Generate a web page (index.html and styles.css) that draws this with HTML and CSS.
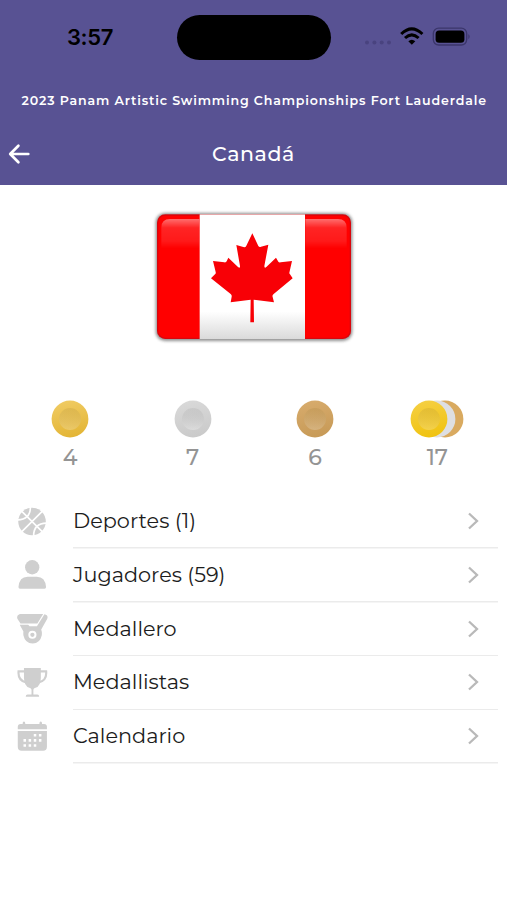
FILE: index.html
```html
<!DOCTYPE html>
<html lang="es">
<head>
<meta charset="utf-8">
<title>Canadá</title>
<link rel="stylesheet" href="styles.css">
</head>
<body>
<header class="header">
  <div class="status">
    <span class="clock">3:57</span>
    <span class="island"></span>
    <svg class="indicators" width="110" height="24" viewBox="0 0 110 24">
      <g fill="#49437f"><circle cx="6" cy="17.500" r="2"/><circle cx="13.400" cy="17.500" r="2"/><circle cx="20.700" cy="17.500" r="2"/><circle cx="28" cy="17.500" r="2"/></g>
      <g fill="none" stroke="#000" stroke-width="3"><path d="M40.200 9Q50.800-1.200 61.400 9"/><path d="M44 13Q50.800 6.600 57.600 13"/></g>
      <path d="M47.300 16.200Q50.800 13.200 54.300 16.200L50.800 19.800Z"/>
      <rect x="72.300" y="3.200" width="33.400" height="16.800" rx="5.400" fill="none" stroke="#3b366b" stroke-width="1.300"/>
      <rect x="74.600" y="5.500" width="28.800" height="12.200" rx="3.500"/>
      <path d="M107.400 9q2.400 2.600 0 5.200z" fill="#3b366b"/>
    </svg>
  </div>
  <div class="event"><span>2023 Panam Artistic Swimming Championships Fort Lauderdale</span></div>
  <nav class="nav">
    <svg class="back" width="22" height="22" viewBox="0 0 22 22"><path d="M20.300 11H2.500M10.400 2.800L2.200 11l8.200 8.200" fill="none" stroke="#fff" stroke-width="2.700" stroke-linecap="round" stroke-linejoin="round"/></svg>
    <h1>Canadá</h1>
  </nav>
</header>
<main>
  <svg class="flag" width="220" height="150" viewBox="0 0 660 450">
    <defs>
      <linearGradient id="white" x2="0" y2="1"><stop offset=".78" stop-color="#fff"/><stop offset="1" stop-color="#dadada"/></linearGradient>
      <linearGradient id="shine" x2="0" y2="1"><stop offset="0" stop-color="#fff" stop-opacity=".43"/><stop offset=".3" stop-color="#fff" stop-opacity=".14"/><stop offset=".75" stop-color="#fff" stop-opacity=".1"/><stop offset="1" stop-color="#fff" stop-opacity="0"/></linearGradient>
      <clipPath id="edge"><rect x="36" y="43" width="582" height="374" rx="25"/></clipPath>
      <filter id="soft"><feGaussianBlur stdDeviation="5"/></filter>
    </defs>
    <rect x="32" y="39" width="590" height="384" rx="28" fill="#666" opacity=".72" filter="url(#soft)"/>
    <g clip-path="url(#edge)">
      <path fill="#f00" d="M36 43h582v374H36z"/>
      <rect x="36" y="43" width="582" height="374" rx="25" fill="none" stroke="#a01020" stroke-opacity=".4" stroke-width="8"/>
      <path fill="url(#white)" d="M164 43h316v374H164z"/>
    </g>
    <path fill="url(#shine)" d="M49 145V83q0-26 26-26h88v88zM481 57h98q26 0 26 26v62H481z"/>
    <path fill="#f80006" d="M322 100l18 38q3 4 8 2l22-6-12 64q0 8 6 3l29-28 7 12q2 3 7 2l34-4-8 35q0 3 2 5l8 12-57 47q-5 4-3 9l4 16-61-8 1 68h-11l1-68-60 8 3-17q1-5-3-8l-59-47 12-12q3-3 2-7l-8-33 34 4q5 1 7-3l5-11 29 28q7 5 6-3l-11-63 21 6q6 2 9-4z"/>
  </svg>
  <svg class="defs" width="0" height="0">
    <defs>
      <linearGradient id="gold" x1=".3" x2=".55" y2="1"><stop stop-color="#f0cb63"/><stop offset="1" stop-color="#e3b535"/></linearGradient>
      <linearGradient id="silver" x1=".3" x2=".55" y2="1"><stop stop-color="#d9d9d9"/><stop offset="1" stop-color="#cacaca"/></linearGradient>
      <linearGradient id="bronze" x1=".3" x2=".55" y2="1"><stop stop-color="#d7ab6c"/><stop offset="1" stop-color="#c79a57"/></linearGradient>
      <linearGradient id="bright" x1=".3" x2=".55" y2="1"><stop stop-color="#f5cf43"/><stop offset="1" stop-color="#f0c310"/></linearGradient>
      <linearGradient id="dish" x2="0" y2="1"><stop stop-color="#8a6a20" stop-opacity=".15"/><stop offset="1" stop-color="#fff" stop-opacity=".22"/></linearGradient>
      <linearGradient id="dishgray" x2="0" y2="1"><stop stop-color="#777" stop-opacity=".13"/><stop offset="1" stop-color="#fff" stop-opacity=".3"/></linearGradient>
    </defs>
  </svg>
  <section class="medals">
    <div class="medal"><svg width="38" height="38"><circle cx="19" cy="19" r="18.400" fill="url(#gold)"/><circle cx="19" cy="19" r="11" fill="url(#dish)"/></svg><span>4</span></div>
    <div class="medal"><svg width="38" height="38"><circle cx="19" cy="19" r="18.400" fill="url(#silver)"/><circle cx="19" cy="19" r="11" fill="url(#dishgray)"/></svg><span>7</span></div>
    <div class="medal"><svg width="38" height="38"><circle cx="19" cy="19" r="18.400" fill="url(#bronze)"/><circle cx="19" cy="19" r="11" fill="url(#dish)"/></svg><span>6</span></div>
    <div class="medal"><svg width="54" height="38"><circle cx="35" cy="19" r="18.400" fill="#d9aa60"/><circle cx="27" cy="19" r="18.400" fill="#dedfe2"/><circle cx="19" cy="19" r="18.400" fill="url(#bright)"/><circle cx="19" cy="19" r="11" fill="url(#dish)"/></svg><span>17</span></div>
  </section>
  <ul class="menu">
    <li>
      <svg class="icon" viewBox="0 0 32 32"><circle cx="15.500" cy="16" r="14.200" fill="#cfcfcf"/><path d="M5 5.500L26 26.500M26 5.500L5 26.500M13.800 1Q14 14 .5 14.300M17.200 31Q17 18 30.500 17.700" fill="none" stroke="#fff" stroke-width="1.700"/></svg>
      <span class="label">Deportes (1)</span><svg class="chevron" viewBox="0 0 12 18"><path d="M2 1.500L10 9 2 16.500"/></svg>
    </li>
    <li>
      <svg class="icon" viewBox="0 0 32 32"><g fill="#cfcfcf"><circle cx="15.700" cy="8.500" r="7.400"/><path d="M1.500 29Q2.300 18.200 11 18.200h9.400Q29.200 18.200 30 29q0 1.600-1.600 1.600H3.100q-1.600 0-1.600-1.600z"/></g></svg>
      <span class="label">Jugadores (59)</span><svg class="chevron" viewBox="0 0 12 18"><path d="M2 1.500L10 9 2 16.500"/></svg>
    </li>
    <li>
      <svg class="icon" viewBox="0 0 32 32"><path fill="#cfcfcf" d="M3 1h24l-6 9.800H3.600L.4 6Q-.8 2 3 1zM28.300 1.200q4.500 1 2.800 5L25 17q1 3 .6 6-1.800 8.500-9.500 8.500T6.600 23q-.2-2 0-4L2.800 12H11.500L13 13.600H20.600z"/><circle cx="15.900" cy="22.500" r="3.200" fill="#cfcfcf" stroke="#fff" stroke-width="2"/></svg>
      <span class="label">Medallero</span><svg class="chevron" viewBox="0 0 12 18"><path d="M2 1.500L10 9 2 16.500"/></svg>
    </li>
    <li>
      <svg class="icon" viewBox="0 0 32 32"><path fill="#cfcfcf" d="M7.200 1h17.400v10q0 8.500-5.500 10.500-2 .8-2.200 2v5h4q2 0 2 2.300H9q0-2.300 2-2.300h4v-5q-.2-1.200-2.200-2Q7.200 19.500 7.200 11z"/><path d="M8 4.500H1.600Q.8 14 9.500 16M23.800 4.500h6.300Q31 14 22.400 16" fill="none" stroke="#cfcfcf" stroke-width="2.200"/></svg>
      <span class="label">Medallistas</span><svg class="chevron" viewBox="0 0 12 18"><path d="M2 1.500L10 9 2 16.500"/></svg>
    </li>
    <li>
      <svg class="icon" viewBox="0 0 32 32"><path fill="#cfcfcf" d="M.8 8.500V6Q.8 3 3.800 3h2q0-2.400 1.400-2.400T8.600 3h14.500q0-2.400 1.400-2.400T25.900 3h2q3 0 3 3v2.500zM.8 10.200h30.100v16.500q0 4-4 4H4.800q-4 0-4-4z"/><path d="M17.300 14.700h2.600M22.600 14.700h2.600M6.700 20h2.600M12 20h2.600M17.300 20h2.600M22.600 20h2.600M6.700 25.200h2.600M12 25.200h2.600M17.300 25.200h2.600" stroke="#fff" stroke-width="2.600"/></svg>
      <span class="label">Calendario</span><svg class="chevron" viewBox="0 0 12 18"><path d="M2 1.500L10 9 2 16.500"/></svg>
    </li>
  </ul>
</main>
</body>
</html>
```
FILE: styles.css
```css
* { box-sizing: border-box; }
body { margin: 0; min-height: 900px; background: #fff; font-family: Montserrat, Inter, sans-serif; overflow: hidden; }
svg { display: block; flex: none; }
.header { height: 185px; background: #585293; color: #fff; }
.status { height: 74px; display: grid; grid-template-columns: 177px 154px 1fr; align-items: center; }
.clock { padding-left: 67px; color: #000; font: 600 22px/26px Inter, sans-serif; letter-spacing: -.4px; }
.island { height: 45px; border-radius: 23px; background: #000; }
.indicators { margin: -1px 0 0 30px; }
.event { height: 51px; padding-left: 21.5px; line-height: 53px; font-size: 12.6px; font-weight: 600; letter-spacing: .85px; white-space: nowrap; }
.nav { height: 60px; display: grid; grid-template-columns: 60px 1fr 60px; align-items: center; padding-bottom: 3px; }
.back { margin-left: 8px; }
h1 { margin: 0; text-align: center; font-size: 20.5px; font-weight: 500; line-height: 26px; letter-spacing: .6px; }
.flag { margin: 15px auto 0 145px; }
.defs { position: absolute; }
.medals { margin: 50px 8.5px 0 9px; display: grid; grid-template-columns: repeat(4, 1fr); justify-items: center; }
.medal { display: flex; flex-direction: column; align-items: center; color: #949494; font-size: 22px; font-weight: 500; line-height: 28px; gap: 6px; }
.menu { list-style: none; margin: 23px 9px 0 17px; padding: 0; }
.menu li { height: 53.8px; display: grid; grid-template-columns: 56px 1fr 12px; align-items: center; padding: 0 19px 1.8px 0; background: linear-gradient(#ebebeb, #ebebeb) 56px 100% / 100% 1.5px no-repeat; }
.icon { width: 31px; height: 31px; }
.label { color: #1c1c1c; font-size: 20.8px; line-height: 28px; white-space: nowrap; }
.chevron { width: 12px; height: 18px; fill: none; stroke: #b9b9b9; stroke-width: 2.3; }
```
